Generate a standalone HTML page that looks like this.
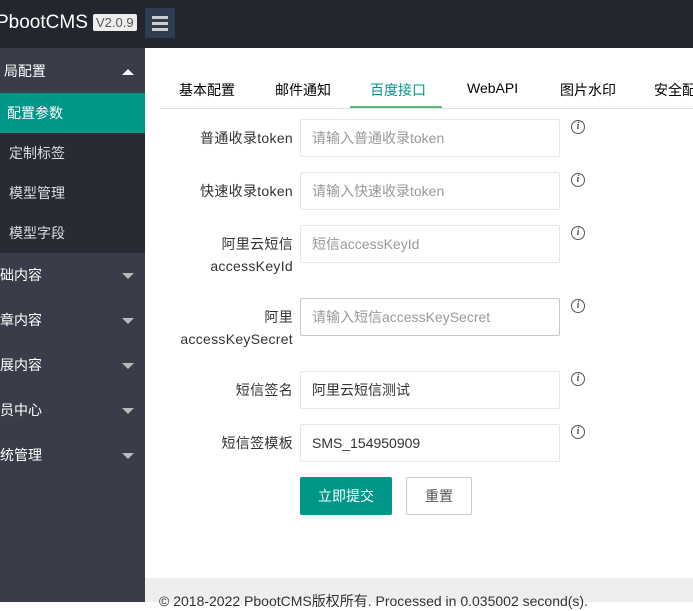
<!DOCTYPE html>
<html><head><meta charset="utf-8"><style>
*{margin:0;padding:0;box-sizing:border-box}
body{width:693px;height:602px;overflow:hidden;font-family:"Liberation Sans","Noto Sans CJK SC",sans-serif;font-size:14px;color:#333;background:#fff;position:relative}
.hd{position:absolute;left:0;top:0;width:693px;height:48px;background:#23262e}
.logo{position:absolute;left:-4px;top:12px;color:#fff;font-size:19px}
.ver{position:absolute;left:93px;top:14px;background:#eee;color:#555;font-size:13px;padding:1px 3px;border-radius:2px}
.menu{position:absolute;left:145px;top:8px;width:30px;height:30px;background:#2f3d52}
.menu i{position:absolute;left:7px;width:16px;height:3px;background:#ccc}
.sb{position:absolute;left:0;top:48px;width:145px;height:554px;background:#393d49}
.it{position:absolute;left:0;width:145px;color:#fff;font-size:14px}
.sub{background:#282b33;color:#ddd}
.arr{position:absolute;right:11px;width:0;height:0;border-left:6px solid transparent;border-right:6px solid transparent}
.tabs{position:absolute;left:160px;top:70px;width:533px;height:39px;border-bottom:1px solid #e2e2e2;overflow:hidden}
.tab{position:absolute;top:10px;font-size:14px;color:#000;white-space:nowrap}
.lb{position:absolute;right:400px;text-align:right;font-size:14px;color:#333;line-height:22px;letter-spacing:0.3px}
.in{position:absolute;left:300px;width:260px;height:38px;border:1px solid #e6e6e6;border-radius:2px;padding-left:11px;line-height:36px;color:#999}
.ic{position:absolute;left:571px;width:14px;height:14px;border:1.3px solid #555;border-radius:50%;font:italic bold 10px/11px "Liberation Serif",serif;text-align:center;color:#555}
.ft{position:absolute;left:145px;top:578px;width:548px;height:24px;background:#eee;color:#333;padding:13px 0 0 14px;font-size:14px;white-space:nowrap}
</style></head><body>
<div class="hd"><div class="logo">PbootCMS</div><div class="ver">V2.0.9</div>
<div class="menu"><i style="top:8px"></i><i style="top:14px"></i><i style="top:20px"></i></div></div>
<div class="sb">
<div class="it" style="top:2px;height:43px;line-height:43px;padding-left:0">&nbsp;局配置<span class="arr" style="top:19px;border-bottom:6px solid #fff"></span></div>
<div class="it" style="top:45px;height:40px;line-height:40px;background:#009688;padding-left:7px">配置参数</div>
<div class="it sub" style="top:85px;height:40px;line-height:40px;padding-left:9px">定制标签</div>
<div class="it sub" style="top:125px;height:40px;line-height:40px;padding-left:9px">模型管理</div>
<div class="it sub" style="top:165px;height:40px;line-height:40px;padding-left:9px">模型字段</div>
<div class="it" style="top:205px;height:45px;line-height:45px">础内容<span class="arr" style="top:20px;border-top:6px solid #bbb"></span></div>
<div class="it" style="top:250px;height:45px;line-height:45px">章内容<span class="arr" style="top:20px;border-top:6px solid #bbb"></span></div>
<div class="it" style="top:295px;height:45px;line-height:45px">展内容<span class="arr" style="top:20px;border-top:6px solid #bbb"></span></div>
<div class="it" style="top:340px;height:45px;line-height:45px">员中心<span class="arr" style="top:20px;border-top:6px solid #bbb"></span></div>
<div class="it" style="top:385px;height:45px;line-height:45px">统管理<span class="arr" style="top:20px;border-top:6px solid #bbb"></span></div>
</div>
<div class="tabs">
<span class="tab" style="left:19px">基本配置</span>
<span class="tab" style="left:115px">邮件通知</span>
<span class="tab" style="left:210px;color:#009688">百度接口</span>
<span class="tab" style="left:307px">WebAPI</span>
<span class="tab" style="left:400px">图片水印</span>
<span class="tab" style="left:494px">安全配置</span>
<div style="position:absolute;left:190px;top:36px;width:92px;height:3px;background:#5fb878"></div>
</div>
<div class="lb" style="top:127px">普通收录token</div>
<div class="in" style="top:119px">请输入普通收录token</div><div class="ic" style="top:120px">i</div>
<div class="lb" style="top:180px">快速收录token</div>
<div class="in" style="top:172px">请输入快速收录token</div><div class="ic" style="top:173px">i</div>
<div class="lb" style="top:233px">阿里云短信<br>accessKeyId</div>
<div class="in" style="top:225px">短信accessKeyId</div><div class="ic" style="top:226px">i</div>
<div class="lb" style="top:306px">阿里<br>accessKeySecret</div>
<div class="in" style="top:298px;border-color:#c9c9c9">请输入短信accessKeySecret</div><div class="ic" style="top:299px">i</div>
<div class="lb" style="top:379px">短信签名</div>
<div class="in" style="top:371px;color:#333">阿里云短信测试</div><div class="ic" style="top:372px">i</div>
<div class="lb" style="top:432px">短信签模板</div>
<div class="in" style="top:424px;color:#333">SMS_154950909</div><div class="ic" style="top:425px">i</div>
<div style="position:absolute;left:300px;top:477px;width:92px;height:38px;background:#009688;color:#fff;text-align:center;line-height:38px;border-radius:2px">立即提交</div>
<div style="position:absolute;left:406px;top:477px;width:66px;height:38px;border:1px solid #c9c9c9;color:#555;text-align:center;line-height:36px;border-radius:2px">重置</div>
<div class="ft">© 2018-2022 PbootCMS版权所有. Processed in 0.035002 second(s).</div>
</body></html>
